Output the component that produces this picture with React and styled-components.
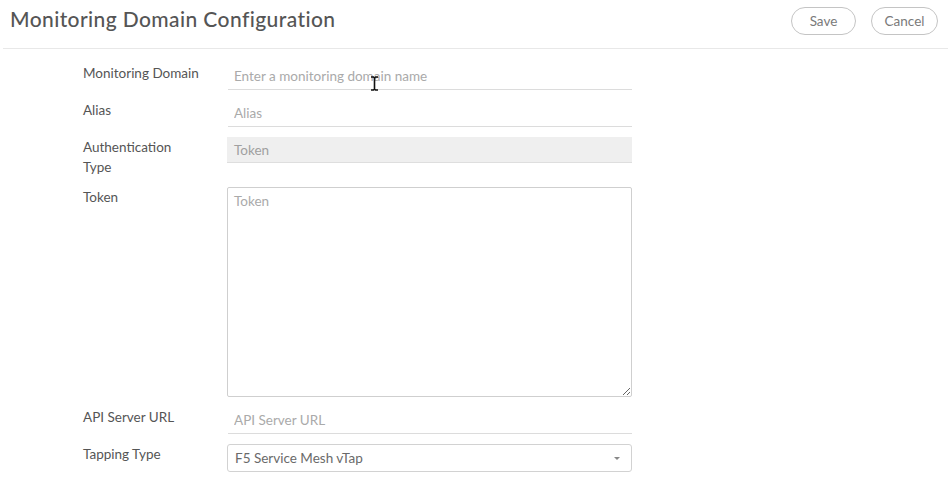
import styled, { createGlobalStyle } from 'styled-components'

const GlobalStyle = createGlobalStyle`
  body {
    margin: 0;
    background: #fff;
    font-family: Lato, "Open Sans", sans-serif;
  }
`

const Page = styled.div`
  position: relative;
  width: 948px;
  height: 479px;
  overflow: hidden;
`

const Header = styled.div`
  height: 49px;
  margin-left: 3px;
  padding: 5px 10px 0 7px;
  box-sizing: border-box;
  border-bottom: 1px solid #e8e8e8;
  display: flex;
  justify-content: space-between;
  align-items: flex-start;
`

const Title = styled.h1`
  margin: 0;
  font-size: 21px;
  line-height: 28px;
  font-weight: 500;
  color: #555;
  letter-spacing: 0.4px;
`

const Actions = styled.div`
  display: flex;
  gap: 15px;
  padding-top: 2px;
`

const PillButton = styled.button`
  width: ${p => p.$w}px;
  height: 28px;
  border: 1px solid #c4c4c4;
  border-radius: 14px;
  background: #fff;
  color: #7a7a7a;
  font-family: inherit;
  font-size: 13.5px;
  cursor: pointer;
`

const Form = styled.div`
  padding: 13px 0 0 83px;
  display: flex;
  flex-direction: column;
  gap: 9px;
`

const Row = styled.div`
  display: flex;
  align-items: flex-start;
`

const Label = styled.div`
  width: 118px;
  margin-right: 27px;
  padding-top: 1px;
  font-size: 13.5px;
  line-height: 20px;
  color: #555;
`

const LineInput = styled.input`
  width: 404px;
  height: 28px;
  box-sizing: border-box;
  border: 0;
  border-bottom: 1px solid #dcdcdc;
  padding: 1px 6px 0;
  font-family: inherit;
  font-size: 13.5px;
  color: #555;
  outline: none;
  background: transparent;
  &::placeholder {
    color: #aaa;
  }
`

const ReadOnlyBox = styled.div`
  width: 405px;
  height: 26px;
  margin: 1px 0 0 -1px;
  box-sizing: border-box;
  background: #efefef;
  border-bottom: 1px solid #dedede;
  padding: 0 7px;
  font-size: 13.5px;
  line-height: 26px;
  color: #a0a0a0;
`

const TokenArea = styled.textarea`
  width: 405px;
  height: 210px;
  margin: 1px 0 0 -1px;
  box-sizing: border-box;
  border: 1px solid #cfcfcf;
  border-radius: 2px;
  padding: 5px 6px;
  font-family: inherit;
  font-size: 13.5px;
  color: #555;
  outline: none;
  resize: vertical;
  &::placeholder {
    color: #aaa;
  }
`

const SelectBox = styled.div`
  width: 405px;
  height: 28px;
  margin: 1px 0 0 -1px;
  box-sizing: border-box;
  border: 1px solid #d2d2d2;
  border-radius: 3px;
  padding: 0 11px 0 7px;
  display: flex;
  align-items: center;
  justify-content: space-between;
  font-size: 13.5px;
  color: #6a6a6a;
`

const Caret = styled.span`
  width: 0;
  height: 0;
  border-left: 3px solid transparent;
  border-right: 3px solid transparent;
  border-top: 3px solid #888;
  margin-top: 1px;
`

const Cursor = styled.svg`
  position: absolute;
  left: 370px;
  top: 76px;
`

export default function App() {
  return (
    <Page>
      <GlobalStyle />
      <Header>
        <Title>Monitoring Domain Configuration</Title>
        <Actions>
          <PillButton $w={65}>Save</PillButton>
          <PillButton $w={67}>Cancel</PillButton>
        </Actions>
      </Header>
      <Form>
        <Row>
          <Label>Monitoring Domain</Label>
          <LineInput placeholder="Enter a monitoring domain name" />
        </Row>
        <Row>
          <Label>Alias</Label>
          <LineInput placeholder="Alias" />
        </Row>
        <Row>
          <Label>Authentication Type</Label>
          <ReadOnlyBox>Token</ReadOnlyBox>
        </Row>
        <Row>
          <Label>Token</Label>
          <TokenArea placeholder="Token" />
        </Row>
        <Row>
          <Label>API Server URL</Label>
          <LineInput placeholder="API Server URL" />
        </Row>
        <Row>
          <Label>Tapping Type</Label>
          <SelectBox>
            F5 Service Mesh vTap
            <Caret />
          </SelectBox>
        </Row>
      </Form>
      <Cursor width="9" height="15" viewBox="0 0 9 15">
        <path d="M1 1h2.5l1 1 1-1H8M4.5 2v11M1 14h2.5l1-1 1 1H8" stroke="#111" strokeWidth="1.6" fill="none" />
      </Cursor>
    </Page>
  )
}
